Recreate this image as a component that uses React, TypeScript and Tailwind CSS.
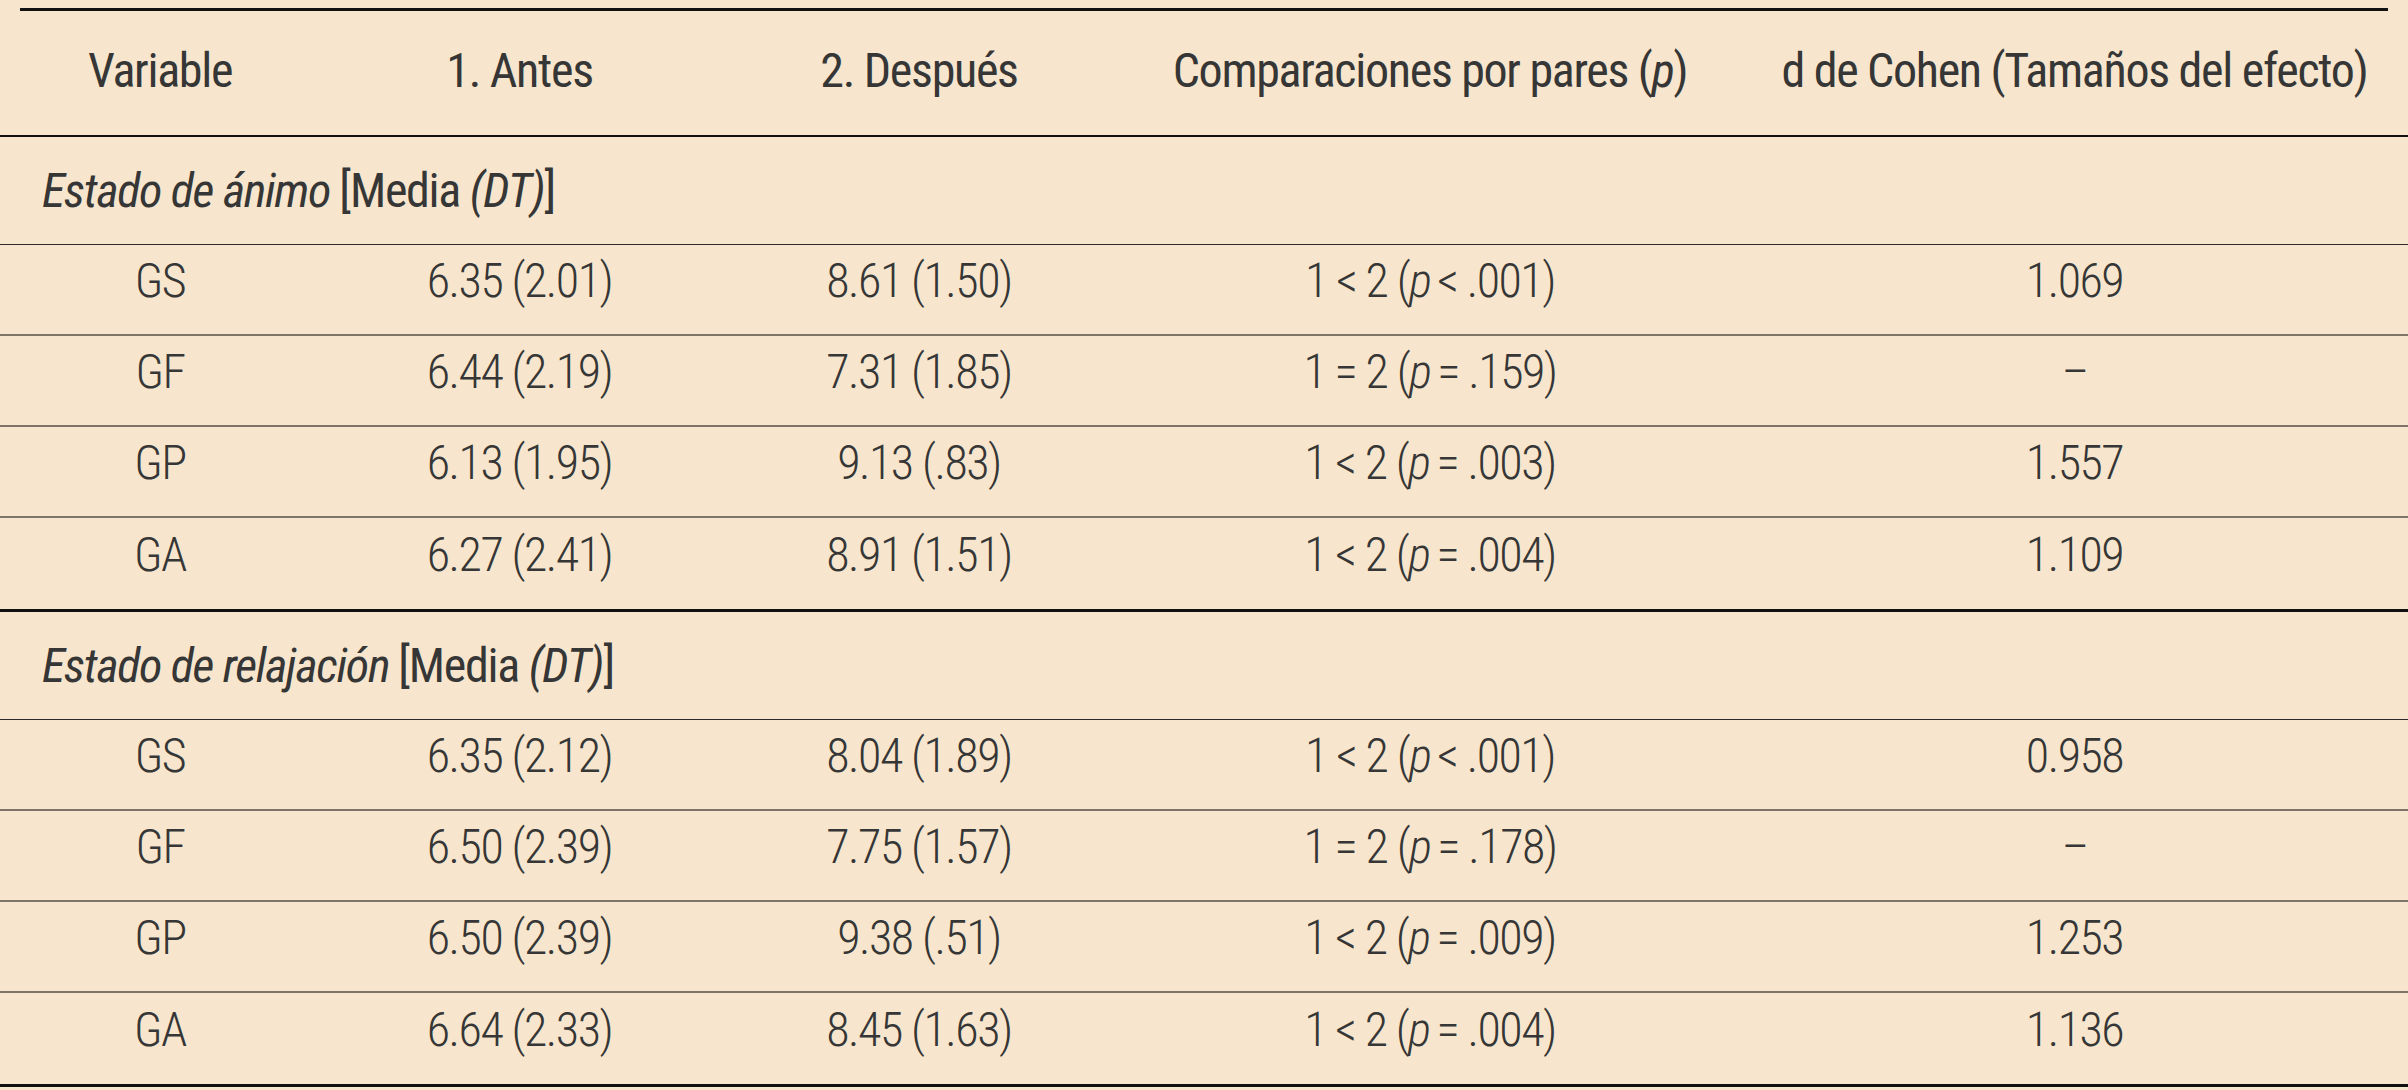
import React from "react";

type Row = { g: string; a: string; b: string; cmp: React.ReactNode; d: string };

const P = () => <i className="italic mr-[7px]">p</i>;

const animo: Row[] = [
  { g: "GS", a: "6.35 (2.01)", b: "8.61 (1.50)", cmp: <>1 &lt; 2 (<P />&lt; .001)</>, d: "1.069" },
  { g: "GF", a: "6.44 (2.19)", b: "7.31 (1.85)", cmp: <>1 = 2 (<P />= .159)</>, d: "–" },
  { g: "GP", a: "6.13 (1.95)", b: "9.13 (.83)", cmp: <>1 &lt; 2 (<P />= .003)</>, d: "1.557" },
  { g: "GA", a: "6.27 (2.41)", b: "8.91 (1.51)", cmp: <>1 &lt; 2 (<P />= .004)</>, d: "1.109" },
];

const relax: Row[] = [
  { g: "GS", a: "6.35 (2.12)", b: "8.04 (1.89)", cmp: <>1 &lt; 2 (<P />&lt; .001)</>, d: "0.958" },
  { g: "GF", a: "6.50 (2.39)", b: "7.75 (1.57)", cmp: <>1 = 2 (<P />= .178)</>, d: "–" },
  { g: "GP", a: "6.50 (2.39)", b: "9.38 (.51)", cmp: <>1 &lt; 2 (<P />= .009)</>, d: "1.253" },
  { g: "GA", a: "6.64 (2.33)", b: "8.45 (1.63)", cmp: <>1 &lt; 2 (<P />= .004)</>, d: "1.136" },
];

const GRID = "grid grid-cols-[320px_399px_400px_622px_667px]";

function DataRow({ r, last }: { r: Row; last: boolean }) {
  const cell = "flex items-center justify-center pb-[18px] whitespace-nowrap";
  return (
    <div
      className={`${GRID} h-[91px] font-light tracking-[-1.5px] ${
        last ? "" : "border-b-2 border-[#7f7566]"
      }`}
    >
      <div className={cell}>{r.g}</div>
      <div className={cell}>{r.a}</div>
      <div className={cell}>{r.b}</div>
      <div className={cell}>
        <span className="whitespace-pre">{r.cmp}</span>
      </div>
      <div className={cell}>{r.d}</div>
    </div>
  );
}

function Section({ title, rows }: { title: string; rows: Row[] }) {
  return (
    <div>
      <div className="h-[108px] flex items-center pl-[42px] border-b border-[#2a2a2a] tracking-[-1.3px] whitespace-nowrap">
        <i className="italic">{title}</i>
        <span className="ml-[9px]">
          [Media <i className="italic">(DT)</i>]
        </span>
      </div>
      {rows.map((r, i) => (
        <DataRow key={i} r={r} last={i === rows.length - 1} />
      ))}
    </div>
  );
}

export default function App() {
  return (
    <div className="w-[2408px] h-[1090px] overflow-hidden bg-[#f7e6cd] text-[#363636] [font-family:Roboto,'Roboto_Condensed',sans-serif] [font-stretch:75%] text-[48px] leading-[56px]">
      <div className="pt-[8px] px-[20px]">
        <div className="h-[3px] bg-[#111]" />
      </div>
      <div className={`${GRID} h-[126px] border-b-2 border-[#111] tracking-[-1.3px]`}>
        <div className="flex items-center justify-center pb-[5px] whitespace-nowrap">Variable</div>
        <div className="flex items-center justify-center pb-[5px] whitespace-nowrap">1. Antes</div>
        <div className="flex items-center justify-center pb-[5px] whitespace-nowrap">2. Después</div>
        <div className="flex items-center justify-center pb-[5px] whitespace-nowrap">
          Comparaciones por pares (<i className="italic">p</i>)
        </div>
        <div className="flex items-center justify-center pb-[5px] whitespace-nowrap">d de Cohen (Tamaños del efecto)</div>
      </div>
      <Section title="Estado de ánimo" rows={animo} />
      <div className="h-[3px] bg-[#111]" />
      <Section title="Estado de relajación" rows={relax} />
      <div className="h-[3px] bg-[#111]" />
    </div>
  );
}
